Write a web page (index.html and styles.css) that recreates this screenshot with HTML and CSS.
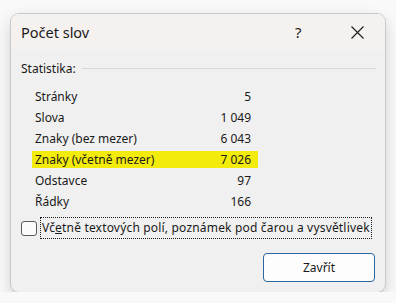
FILE: index.html
```html
<!DOCTYPE html>
<html>
  <head>
    <meta charset="UTF-8" />
    <title>Počet slov</title>
    <link rel="stylesheet" href="styles.css">
  </head>

  <body>
    <div class="dialog">
      <div class="titlebar">
        <span class="title">Počet slov</span>
        <span class="help">?</span>
        <span class="close">
          <svg width="13" height="13" viewBox="0 0 13 13">
            <path d="M0.5 0.5 L12.5 12.5 M12.5 0.5 L0.5 12.5" stroke="#1a1a1a" stroke-width="1.1" fill="none" />
          </svg>
        </span>
      </div>

      <div class="content">
        <div class="group-head">
          <span>Statistika:</span>
          <span class="rule"></span>
        </div>

        <div class="stats">
          <div class="row"><span>Stránky</span><span>5</span></div>
          <div class="row"><span>Slova</span><span>1 049</span></div>
          <div class="row"><span>Znaky (bez mezer)</span><span>6 043</span></div>
          <div class="row marked"><span>Znaky (včetně mezer)</span><span>7 026</span></div>
          <div class="row"><span>Odstavce</span><span>97</span></div>
          <div class="row"><span>Řádky</span><span>166</span></div>
        </div>

        <label class="check">
          <span class="box"></span>
          <span class="check-text">Vč<u>e</u>tně textových polí, poznámek pod čarou a vysvětlivek</span>
        </label>

        <div class="buttons">
          <button class="btn">Zavřít</button>
        </div>
      </div>
    </div>
  </body>
</html>
```

FILE: styles.css
```css
/* okno dialogu */
body {
  margin: 0;
  padding: 14px 11px 0 11px;
  background-color: #f9f9f9;
  font-family: "Noto Sans", "Open Sans", sans-serif;
  font-size: 12px;
  color: #1a1a1a;
}

.dialog {
  width: 374px;
  height: 278px;
  border-radius: 8px;
  background-color: #f0f0f0;
  box-shadow: 0 0 0 1px #c9c9c9, 0 6px 16px rgba(0, 0, 0, 0.18);
  overflow: hidden;
}

.titlebar {
  height: 36px;
  background-color: #f5f1ef;
  display: flex;
  align-items: center;
  padding-left: 10px;
}

.title {
  font-size: 14.5px;
  flex: 1;
}

.help {
  font-size: 15px;
  width: 56px;
}

.close {
  width: 34px;
  display: flex;
}

.content {
  padding: 10px 9px 0 10px;
}

.group-head {
  display: flex;
  align-items: center;
  height: 16px;
}

.group-head .rule {
  flex: 1;
  height: 1px;
  background-color: #d9d9d9;
  margin-left: 6px;
}

.stats {
  padding: 10px 0 0 11px;
  width: 226px;
}

.row {
  display: flex;
  justify-content: space-between;
  height: 21px;
  align-items: center;
  padding: 0 7px 0 3px;
}

.row.marked {
  background-color: #f3eb0c;
  height: 17px;
  margin: 2px 0;
}

.check {
  display: flex;
  align-items: center;
  margin-top: 5px;
}

.box {
  width: 14px;
  height: 13px;
  border: 1px solid #5a5a5a;
  border-radius: 3px;
  background-color: #fbfbfb;
}

.check-text {
  margin-left: 3px;
  padding: 1px 1px 2px 1px;
  border: 1px dotted #1a1a1a;
  letter-spacing: 0.18px;
}

.buttons {
  display: flex;
  justify-content: flex-end;
  margin-top: 14px;
  padding-right: 1px;
}

.btn {
  width: 112px;
  height: 29px;
  background-color: #fdfdfd;
  border: 1px solid #2b66a0;
  border-radius: 4px;
  font-family: inherit;
  font-size: 12px;
  color: #1a1a1a;
}
```
